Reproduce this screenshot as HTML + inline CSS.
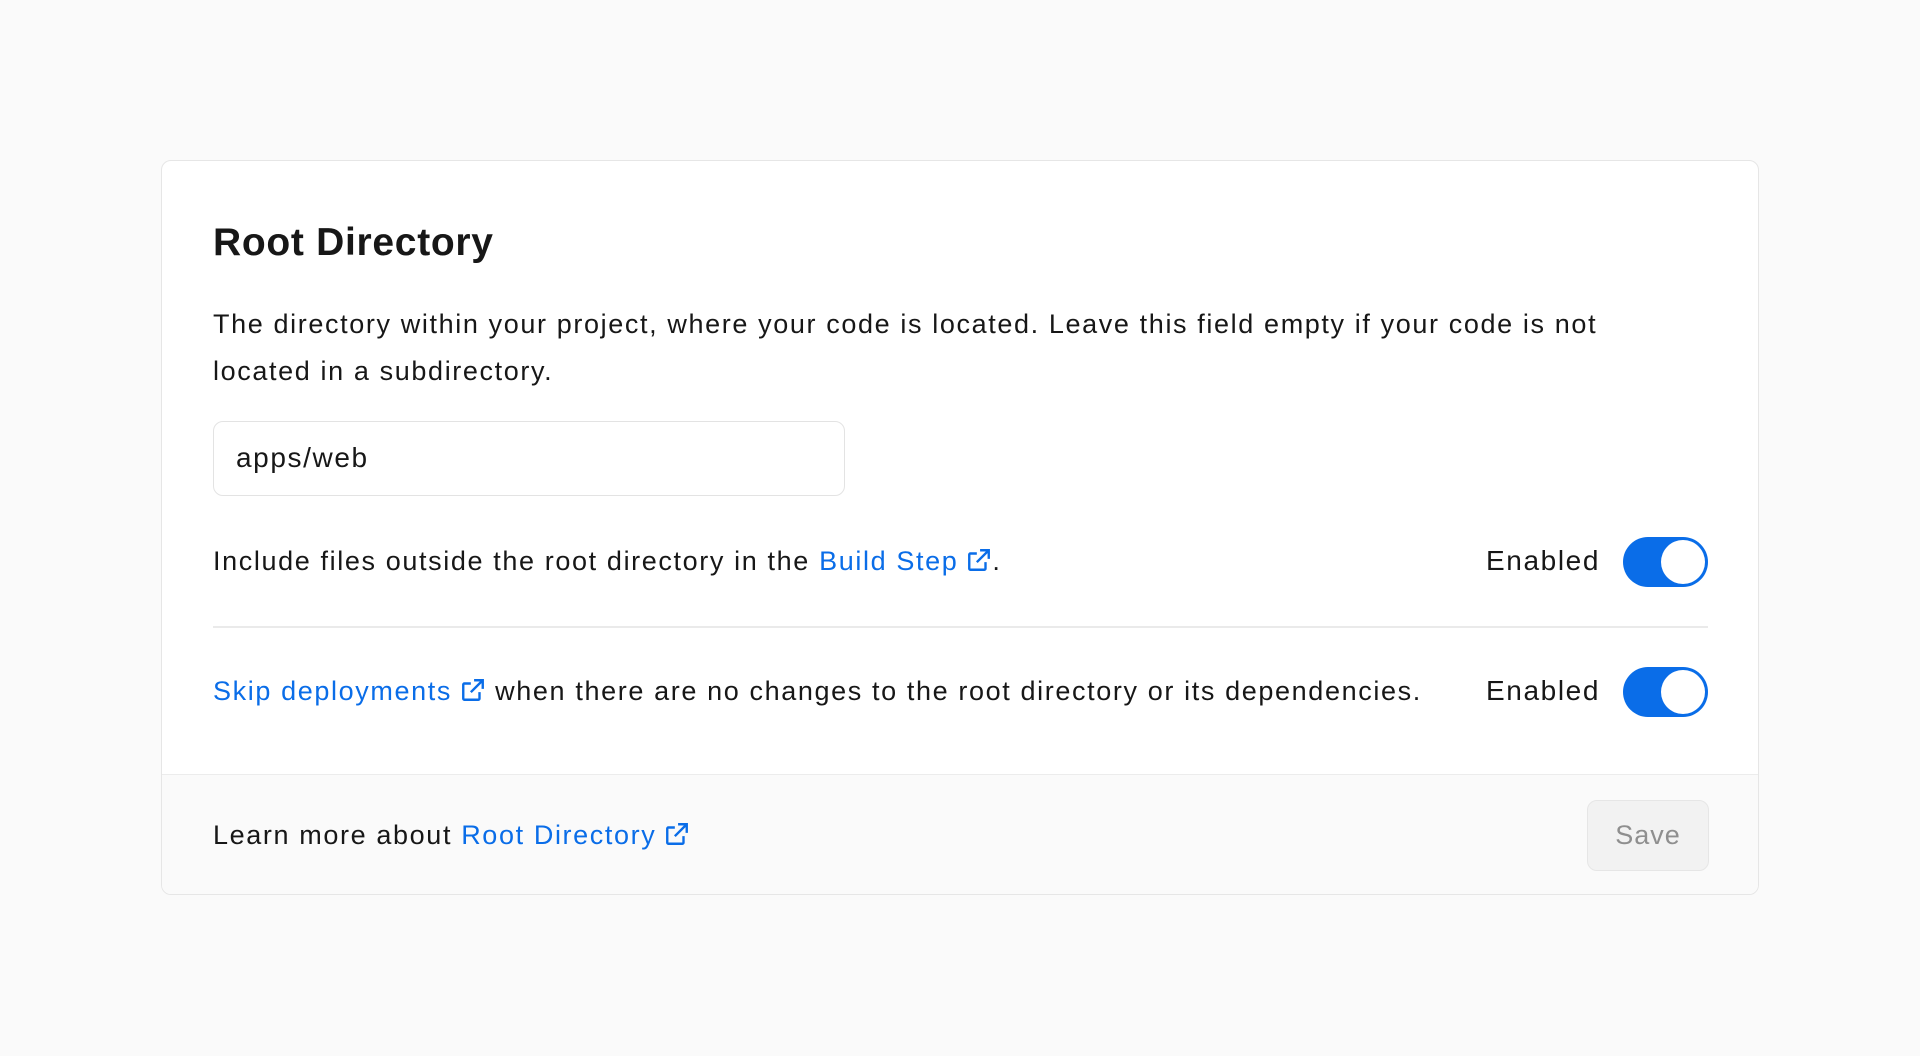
<!DOCTYPE html>
<html><head><meta charset="utf-8"><style>
*{box-sizing:border-box;margin:0;padding:0}
body{width:1920px;height:1056px;background:#fafafa;font-family:"Liberation Sans",sans-serif;color:#171717;position:relative;overflow:hidden}
.card{position:absolute;left:161px;top:160px;width:1598px;height:735px;background:#fff;border:1.5px solid #e6e6e6;border-radius:10px;overflow:hidden}
.abs{position:absolute;white-space:nowrap}
h1{position:absolute;left:51px;top:60px;font-size:39px;font-weight:700;letter-spacing:0.7px}
.p{left:51px;font-size:27px;line-height:47px;letter-spacing:1.62px}
a{color:#0a6de8;text-decoration:none}
.input{position:absolute;left:51px;top:260px;width:632px;height:75px;border:1.5px solid #e3e3e3;border-radius:10px;font-size:28px;padding-left:22px;line-height:72px;letter-spacing:1.6px}
.tog{position:absolute;left:1461px;width:85px;height:50px;border-radius:25px;background:#0a6de8}
.tog::after{content:"";position:absolute;right:3px;top:3px;width:44px;height:44px;border-radius:50%;background:#fff}
.en{right:158px;font-size:28px;letter-spacing:1.6px}
.div{position:absolute;left:51px;top:465px;width:1495px;height:1.5px;background:#eaeaea}
.foot{position:absolute;left:0;top:613px;width:100%;height:122px;background:#fafafa;border-top:1.5px solid #ececec}
.save{position:absolute;left:1425px;top:25px;width:122px;height:71px;border:1.5px solid #e6e6e6;border-radius:10px;background:#f2f2f2;color:#8f8f8f;font-size:27px;text-align:center;line-height:68px;letter-spacing:1px}
svg{vertical-align:-3px;margin-left:8px}
</style></head><body>
<div class="card">
<h1>Root Directory</h1>
<div class="abs p" style="top:140px">The directory within your project, where your code is located. Leave this field empty if your code is not</div>
<div class="abs p" style="top:187px">located in a subdirectory.</div>
<div class="input">apps/web</div>
<div class="abs p" style="top:377px">Include files outside the root directory in the <a>Build Step<svg width="26" height="26" viewBox="0 0 24 24" fill="none" stroke="#0a6de8" stroke-width="2.2"><path d="M13 3h8v8M21 3L10 14M18 14v6a1 1 0 0 1-1 1H4a1 1 0 0 1-1-1V7a1 1 0 0 1 1-1h6"/></svg></a>.</div>
<div class="abs en" style="top:384px">Enabled</div>
<div class="tog" style="top:376px"></div>
<div class="div"></div>
<div class="abs p" style="top:507px"><a>Skip deployments<svg width="26" height="26" viewBox="0 0 24 24" fill="none" stroke="#0a6de8" stroke-width="2.2"><path d="M13 3h8v8M21 3L10 14M18 14v6a1 1 0 0 1-1 1H4a1 1 0 0 1-1-1V7a1 1 0 0 1 1-1h6"/></svg></a> when there are no changes to the root directory or its dependencies.</div>
<div class="abs en" style="top:514px">Enabled</div>
<div class="tog" style="top:506px"></div>
<div class="foot">
<div class="abs p" style="top:37px">Learn more about <a>Root Directory<svg width="26" height="26" viewBox="0 0 24 24" fill="none" stroke="#0a6de8" stroke-width="2.2"><path d="M13 3h8v8M21 3L10 14M18 14v6a1 1 0 0 1-1 1H4a1 1 0 0 1-1-1V7a1 1 0 0 1 1-1h6"/></svg></a></div>
<div class="save">Save</div>
</div>
</div>
</body></html>
